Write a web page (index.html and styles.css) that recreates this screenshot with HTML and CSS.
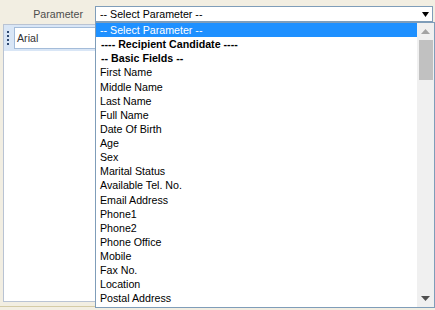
FILE: index.html
```html
<!DOCTYPE html>
<html lang="en">
<head>
    <meta charset="UTF-8">
    <title>Parameter</title>
    <link rel="stylesheet" href="styles.css">
</head>
<body>
    <div class="params">
        <label class="params-label" for="parameter">Parameter</label>
        <div class="picker" id="parameter">
            <div class="picker-box">
                <span>-- Select Parameter --</span>
                <svg class="picker-arrow" width="7" height="5" viewBox="0 0 7 5"><path d="M0 0H7L3.5 5Z" fill="#000"/></svg>
            </div>

            <!-- lista abierta del select -->
            <div class="picker-list">
                <ul class="options">
                    <li class="selected">-- Select Parameter --</li>
                    <li class="group">---- Recipient Candidate ----</li>
                    <li class="group">-- Basic Fields --</li>
                    <li>First Name</li>
                    <li>Middle Name</li>
                    <li>Last Name</li>
                    <li>Full Name</li>
                    <li>Date Of Birth</li>
                    <li>Age</li>
                    <li>Sex</li>
                    <li>Marital Status</li>
                    <li>Available Tel. No.</li>
                    <li>Email Address</li>
                    <li>Phone1</li>
                    <li>Phone2</li>
                    <li>Phone Office</li>
                    <li>Mobile</li>
                    <li>Fax No.</li>
                    <li>Location</li>
                    <li>Postal Address</li>
                </ul>
                <div class="scrollbar">
                    <div class="scroll-btn">
                        <svg width="9" height="5" viewBox="0 0 9 5"><path d="M0 5H9L4.5 0Z" fill="#a3a3a3"/></svg>
                    </div>
                    <div class="scroll-track"><div class="scroll-thumb"></div></div>
                    <div class="scroll-btn">
                        <svg width="9" height="5" viewBox="0 0 9 5"><path d="M0 0H9L4.5 5Z" fill="#505050"/></svg>
                    </div>
                </div>
            </div>
        </div>
    </div>

    <div class="editor">
        <div class="editor-bar">
            <span class="grip"></span>
            <div class="font-box">Arial</div>
        </div>
    </div>

    <div class="status"></div>
</body>
</html>
```

FILE: styles.css
```css
/* Estilos de la página de parámetros */
body {
    margin: 0;
    height: 310px;
    overflow: hidden;
    background-color: #f2eee2;
    font-family: "Liberation Sans", Arial, sans-serif;
    font-size: 10.67px;
    color: #000;
}

.params {
    display: flex;
    align-items: center;
    padding-top: 6px;
    height: 16px;
}

.params-label {
    width: 83px;
    margin-right: 12px;
    text-align: right;
    color: #4d4d4d;
}

.picker {
    position: relative;
    width: 338px;
}

.picker-box {
    height: 14px;
    border: 1px solid #7f9db9;
    background-color: #ffffff;
    display: flex;
    align-items: center;
    justify-content: space-between;
    padding: 0 3px 0 4px;
}

.picker-arrow {
    display: block;
}

.picker-list {
    position: absolute;
    top: 16px;
    left: 0;
    z-index: 2;
    width: 338px;
    height: 284px;
    border: 1px solid #7f9db9;
    background-color: #ffffff;
    display: flex;
}

.options {
    list-style: none;
    margin: 0;
    padding: 0;
    flex: 1;
}

.options li {
    height: 14.13px;
    line-height: 14px;
    padding-left: 4px;
    white-space: nowrap;
}

.options .selected {
    background-color: #1e90ff;
    color: #ffffff;
}

.options .group {
    font-weight: bold;
    padding-left: 5px;
}

.scrollbar {
    width: 17px;
    background-color: #f0f0f0;
    display: flex;
    flex-direction: column;
}

.scroll-btn {
    height: 17px;
    display: flex;
    align-items: center;
    justify-content: center;
}

.scroll-track {
    flex: 1;
}

.scroll-thumb {
    margin: 0 1px 0 2px;
    height: 40px;
    background-color: #c1c1c1;
}

.editor {
    margin: 2px 4px 0 3px;
    height: 276px;
    border: 1px solid #b9c3d3;
    background-color: #ffffff;
}

.editor-bar {
    display: flex;
    align-items: center;
    height: 26px;
    background-color: #d9e6f6;
}

.grip {
    width: 2px;
    height: 14px;
    margin: 0 5px 0 3px;
    background: repeating-linear-gradient(#2f4a70 0 2px, transparent 2px 4px);
}

.font-box {
    width: 120px;
    height: 20px;
    line-height: 20px;
    padding-left: 2px;
    border: 1px solid #a4bcd9;
    background-color: #ffffff;
    color: #333333;
}

.status {
    margin-top: 4px;
    border-top: 1px solid #d4cba6;
}
```
